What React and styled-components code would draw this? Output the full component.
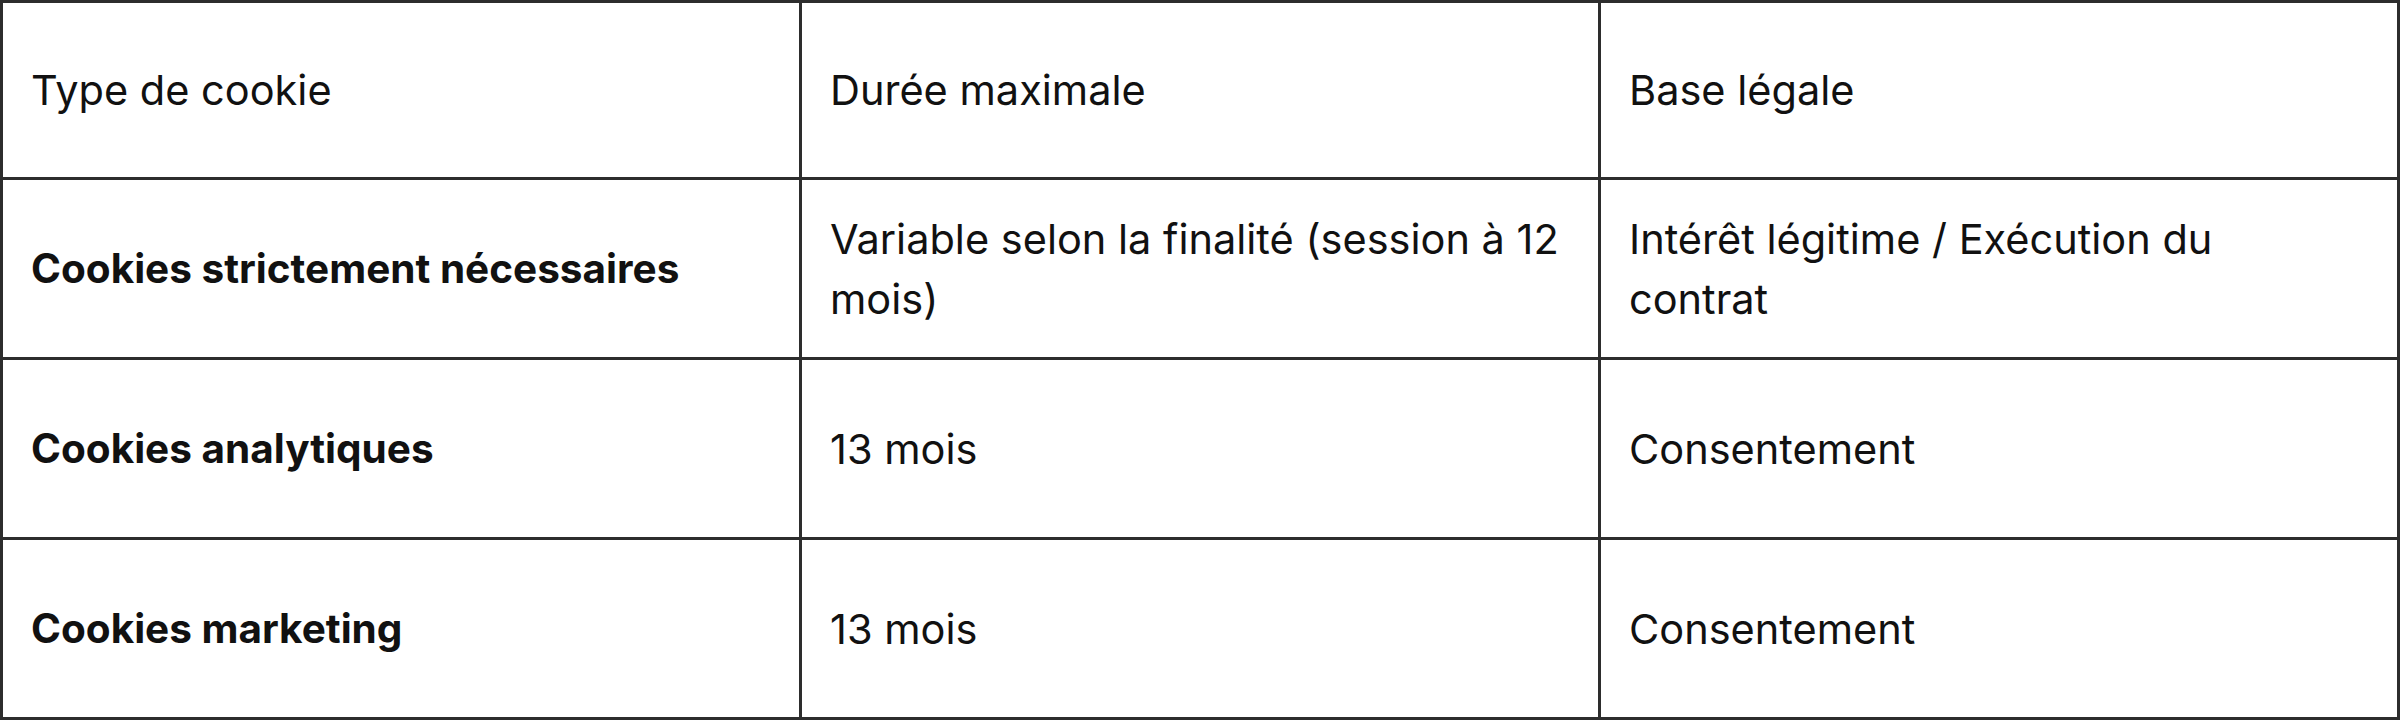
import React from "react";
import styled, { createGlobalStyle } from "styled-components";

const GlobalStyle = createGlobalStyle`
  html, body {
    margin: 0;
    padding: 0;
    background: #ffffff;
  }
  body {
    font-family: "Inter", "Noto Sans", "Liberation Sans", sans-serif;
    color: #111111;
  }
`;

const Table = styled.table`
  width: 2400px;
  height: 720px;
  border-collapse: collapse;
  table-layout: fixed;
  line-height: 60px;
`;

const Row = styled.tr`
  height: ${(p) => (p.$head ? "177px" : "180px")};
`;

const Cell = styled.td`
  border: 3px solid #2d2d2d;
  padding: 0 ${(p) => (p.$last ? "90px" : "30px")} 0 28px;
  vertical-align: middle;
  text-align: left;
  font-size: ${(p) => (p.$strong ? "40.5px" : "41.5px")};
  font-weight: ${(p) => (p.$strong ? 700 : 400)};
  color: #111111;
`;

const rows = [
  ["Cookies strictement nécessaires", "Variable selon la finalité (session à 12 mois)", "Intérêt légitime / Exécution du contrat"],
  ["Cookies analytiques", "13 mois", "Consentement"],
  ["Cookies marketing", "13 mois", "Consentement"],
];

export default function App() {
  return (
    <>
      <GlobalStyle />
      <Table>
        <tbody>
          <Row $head>
            <Cell>Type de cookie</Cell>
            <Cell>Durée maximale</Cell>
            <Cell $last>Base légale</Cell>
          </Row>
          {rows.map((r) => (
            <Row key={r[0]}>
              <Cell $strong>{r[0]}</Cell>
              <Cell>{r[1]}</Cell>
              <Cell $last>{r[2]}</Cell>
            </Row>
          ))}
        </tbody>
      </Table>
    </>
  );
}
